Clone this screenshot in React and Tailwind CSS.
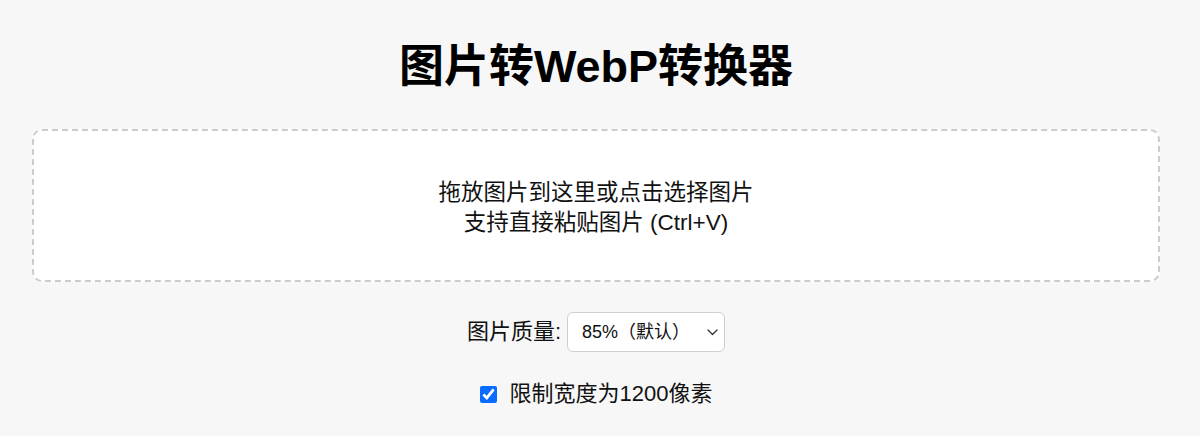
import { useState } from "react"

const ChevronDown = () => (
  <svg width="11" height="7" viewBox="0 0 11 7" fill="none" className="pointer-events-none">
    <path d="M1 1l4.5 4.5L10 1" stroke="#333" strokeWidth="1.3" strokeLinecap="round" strokeLinejoin="round" />
  </svg>
)

const App = () => {
  const [quality, setQuality] = useState("85")
  const [limitWidth, setLimitWidth] = useState(true)

  return (
    <div className="min-h-[436px] bg-[#f7f7f7] font-['Liberation_Sans','Noto_Sans_CJK_SC',sans-serif] text-[#111]">
      <div className="ml-[32px] w-[1128px] pt-[40px]">
        <h1 className="text-center text-[45px] font-bold leading-[54px] text-black">图片转WebP转换器</h1>

        {/* drop zone */}
        <div className="mt-[35px] flex h-[153px] cursor-pointer flex-col items-center justify-center rounded-[10px] border-2 border-dashed border-[#cccccc] bg-white pt-[4px] text-[22.5px] leading-[30px]">
          <p>拖放图片到这里或点击选择图片</p>
          <p>支持直接粘贴图片 (Ctrl+V)</p>
        </div>

        {/* options */}
        <div className="mt-[30px] flex items-center justify-center gap-[6px]">
          <label htmlFor="quality" className="text-[22px] leading-[30px]">图片质量:</label>
          <div className="relative">
            <select
              id="quality"
              value={quality}
              onChange={(e) => setQuality(e.target.value)}
              className="h-[40px] w-[158px] appearance-none rounded-[6px] border border-[#cfcfcf] bg-white pl-[14px] pr-[30px] text-[18px] text-[#111] outline-none"
            >
              <option value="100">100%（无损）</option>
              <option value="90">90%</option>
              <option value="85">85%（默认）</option>
              <option value="75">75%</option>
              <option value="60">60%</option>
            </select>
            <span className="absolute right-[7px] top-[17px]">
              <ChevronDown />
            </span>
          </div>
        </div>

        <div className="mt-[27px] flex items-center justify-center gap-[13px]">
          <input
            id="limit"
            type="checkbox"
            checked={limitWidth}
            onChange={(e) => setLimitWidth(e.target.checked)}
            className="h-[17px] w-[17px] accent-[#0a6cff]"
          />
          <label htmlFor="limit" className="text-[22px] leading-[30px]">限制宽度为1200像素</label>
        </div>
      </div>
    </div>
  )
}

export default App
